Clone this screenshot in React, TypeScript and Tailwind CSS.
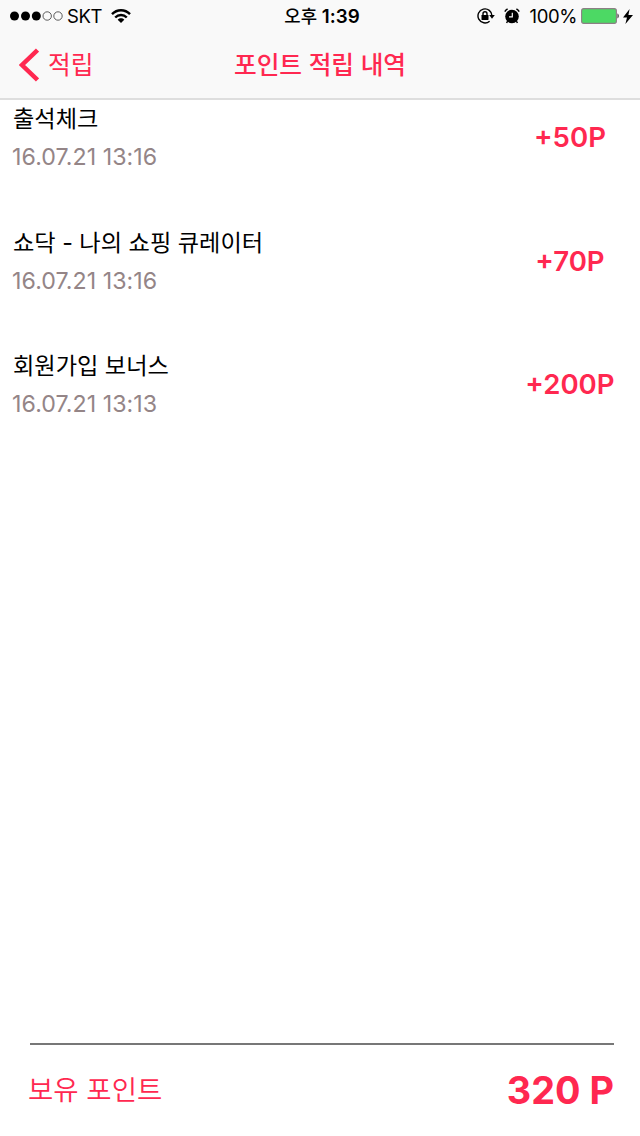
interface PointEntry {
  id: number;
  title: string;
  date: string;
  amount: string;
}

const entries: PointEntry[] = [
  { id: 1, title: "출석체크", date: "16.07.21 13:16", amount: "+50P" },
  { id: 2, title: "쇼닥 - 나의 쇼핑 큐레이터", date: "16.07.21 13:16", amount: "+70P" },
  { id: 3, title: "회원가입 보너스", date: "16.07.21 13:13", amount: "+200P" },
];

function SignalDots() {
  return (
    <svg className="w-[53px] h-[10px]" viewBox="0 0 53 10">
      {[4.5, 15.5, 26.3].map((cx) => (
        <circle key={cx} cx={cx} cy="5" r="4.5" fill="#000" />
      ))}
      {[37.2, 48].map((cx) => (
        <circle key={cx} cx={cx} cy="5" r="4.2" fill="none" stroke="#333" strokeWidth="0.8" />
      ))}
    </svg>
  );
}

function WifiIcon() {
  return (
    <svg className="w-[20px] h-[14px]" viewBox="0 0 20 14" fill="none" stroke="#000" strokeWidth="2.4">
      <path d="M1 5.2C6 0 14 0 19 5.2" />
      <path d="M4.2 8.5c3.3-3.4 8.3-3.4 11.6 0" />
      <path d="M10 14 6.7 10.7c1.9-1.9 4.7-1.9 6.6 0Z" fill="#000" stroke="none" />
    </svg>
  );
}

function RotationLockIcon() {
  return (
    <svg className="w-[19px] h-[16px]" viewBox="0 0 19 16" fill="none" stroke="#000" strokeWidth="1.4">
      <path d="M15 7.8A7 7 0 1 0 12.6 13.2" />
      <path d="M12.2 7h5.6L15 10.8Z" fill="#000" stroke="none" />
      <rect x="4.5" y="7" width="7" height="5" rx="0.4" fill="#000" stroke="none" />
      <path d="M6 7.2V5.8a2 2 0 0 1 4 0v1.4" />
    </svg>
  );
}

function AlarmIcon() {
  return (
    <svg className="w-[16px] h-[16px]" viewBox="0 0 16 16" fill="none">
      <circle cx="8" cy="8.5" r="6.8" fill="#000" />
      <path d="M0.8 3.6A8 8 0 0 1 3.6 0.9M15.2 3.6a8 8 0 0 0-2.8-2.7" stroke="#000" strokeWidth="1.5" />
      <path d="m3.6 13.2-1 1.8M12.4 13.2l1 1.8" stroke="#000" strokeWidth="1.4" />
      <path d="M8.3 4.8v4H5" stroke="#f9f9f9" strokeWidth="1.2" />
    </svg>
  );
}

function BatteryIcon() {
  return (
    <svg className="w-[38px] h-[16px]" viewBox="0 0 38 16">
      <rect x="0.6" y="0.6" width="34.8" height="14.8" rx="2.2" fill="#4cd964" stroke="#8d7f85" strokeWidth="1.1" />
      <path d="M36.5 5.6c1.6.5 1.6 4.3 0 4.8Z" fill="#222" />
    </svg>
  );
}

function StatusBar() {
  return (
    <div className="grid grid-cols-[1fr_auto_1fr] items-center h-8 pl-[10px] pr-[7px] text-[18.5px] text-black">
      <div className="flex items-center">
        <SignalDots />
        <span className="ml-1 pt-px tracking-[-0.4px]">SKT</span>
        <span className="ml-[9px]"><WifiIcon /></span>
      </div>
      <div className="pt-[3px] pl-px text-[18.8px] font-semibold whitespace-nowrap">
        <span className="text-[17.8px] font-medium">오후</span> 1:39
      </div>
      <div className="flex items-center justify-end">
        <RotationLockIcon />
        <span className="ml-2"><AlarmIcon /></span>
        <span className="ml-[10px] pt-px tracking-[-0.4px]">100%</span>
        <span className="ml-1"><BatteryIcon /></span>
        <svg className="ml-1 w-[10px] h-[15px]" viewBox="0 0 10 15">
          <path d="M6.6 0 0 8.4h4L2.4 15 10 6H5.4Z" fill="#000" />
        </svg>
      </div>
    </div>
  );
}

function NavBar() {
  return (
    <div className="grid grid-cols-[1fr_auto_1fr] items-center h-[66px] px-[19px] text-[#ff2850]">
      <button className="flex items-center text-[24.7px]">
        <svg className="w-[20px] h-[34px]" viewBox="0 0 20 34" fill="none">
          <path d="M18.5 2 3 17l15.5 15" stroke="currentColor" strokeWidth="4.5" />
        </svg>
        <span className="ml-[9px] pt-[2px]">적립</span>
      </button>
      <h1 className="pt-[2px] text-[24.7px] font-medium">포인트 적립 내역</h1>
    </div>
  );
}

export default function App() {
  return (
    <div className="flex flex-col w-[640px] h-[1136px] bg-white overflow-hidden font-['Inter','Noto_Sans_CJK_KR',sans-serif]">
      <header className="shrink-0 h-[100px] bg-[#f9f9f9] border-b-2 border-[#dedede]">
        <StatusBar />
        <NavBar />
      </header>

      <ul className="flex-1">
        {entries.map((entry) => (
          <li key={entry.id} className="flex justify-between h-[123.5px] pl-3">
            <div>
              <div className="h-[37px] leading-[38px] pl-px text-[23.2px] text-black">{entry.title}</div>
              <div className="h-[40px] leading-[40px] text-[23.2px] tracking-[0.05px] text-[#948587]">
                {entry.date}
              </div>
            </div>
            <div className="w-[140px] h-[76px] leading-[75px] text-center text-[27.6px] font-semibold text-[#ff2850]">
              {entry.amount}
            </div>
          </li>
        ))}
      </ul>

      <footer className="flex items-center justify-between shrink-0 h-[93px] ml-[30px] mr-[26px] border-t-2 border-[#777] text-[#ff2850]">
        <span className="-ml-[2px] text-[27.5px] font-[350]">보유 포인트</span>
        <span className="text-[37.8px] font-bold">320 P</span>
      </footer>
    </div>
  );
}
